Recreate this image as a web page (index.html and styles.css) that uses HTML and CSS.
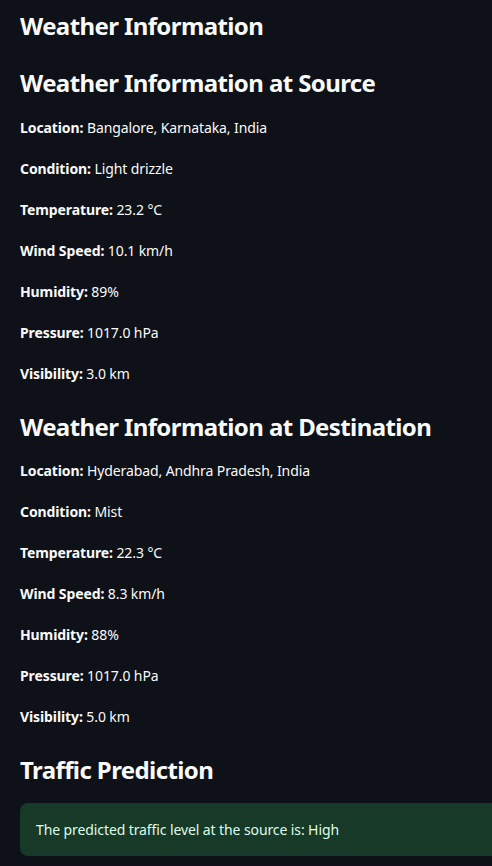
FILE: index.html
```html
<!DOCTYPE html>
<html>
<head>
<meta charset="utf-8">
<link rel="stylesheet" href="styles.css">
</head>
<body>
<main class="page">
  <h2 class="heading first">Weather Information</h2>
  <h2 class="heading">Weather Information at Source</h2>
  <div class="list">
    <p class="row"><b>Location:</b> Bangalore, Karnataka, India</p>
    <p class="row"><b>Condition:</b> Light drizzle</p>
    <p class="row"><b>Temperature:</b> 23.2 °C</p>
    <p class="row"><b>Wind Speed:</b> 10.1 km/h</p>
    <p class="row"><b>Humidity:</b> 89%</p>
    <p class="row"><b>Pressure:</b> 1017.0 hPa</p>
    <p class="row"><b>Visibility:</b> 3.0 km</p>
  </div>
  <h2 class="heading">Weather Information at Destination</h2>
  <div class="list dest">
    <p class="row"><b>Location:</b> Hyderabad, Andhra Pradesh, India</p>
    <p class="row"><b>Condition:</b> Mist</p>
    <p class="row"><b>Temperature:</b> 22.3 °C</p>
    <p class="row"><b>Wind Speed:</b> 8.3 km/h</p>
    <p class="row"><b>Humidity:</b> 88%</p>
    <p class="row"><b>Pressure:</b> 1017.0 hPa</p>
    <p class="row"><b>Visibility:</b> 5.0 km</p>
  </div>
  <h2 class="heading">Traffic Prediction</h2>
  <div class="alert">The predicted traffic level at the source is: High</div>
</main>
</body>
</html>
```
FILE: styles.css
```css
html, body {
  margin: 0;
  padding: 0;
  background: #0e1117;
  overflow: hidden;
}
body {
  font-family: "Noto Sans", "Open Sans", sans-serif;
  color: #fafafa;
}
.page {
  display: flex;
  flex-direction: column;
  padding: 10px 0 0 20px;
}
.heading {
  margin: 26px 0 0 0;
  font-size: 24px;
  line-height: 31px;
  font-weight: 700;
  letter-spacing: -0.6px;
}
.heading.first {
  margin-top: 0;
}
.list {
  display: flex;
  flex-direction: column;
  gap: 19px;
  margin-top: 19px;
}
.list.dest {
  margin-top: 18px;
}
.row {
  margin: 0;
  font-size: 14px;
  line-height: 22px;
  letter-spacing: -0.1px;
}
.row b {
  font-weight: 700;
}
.alert {
  margin: 18px -20px 0 0;
  padding: 0 16px;
  height: 53px;
  display: flex;
  align-items: center;
  background: #173928;
  color: #dffde9;
  border-radius: 8px;
  font-size: 14px;
  letter-spacing: -0.1px;
}
```
